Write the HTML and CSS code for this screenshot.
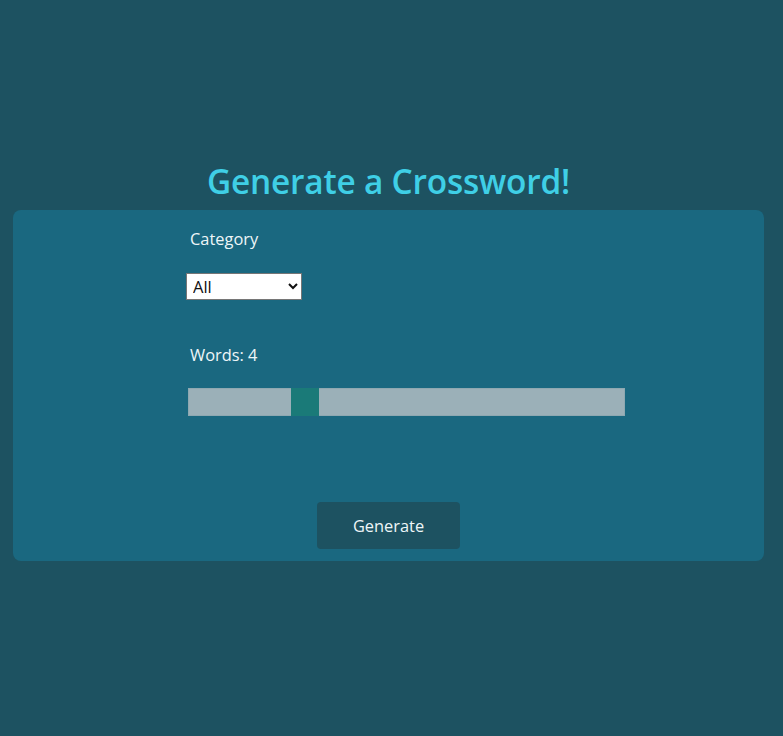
FILE: index.html
```html
<!DOCTYPE html>
<html lang="en">
<head>
<meta charset="utf-8">
<title>Generate a Crossword!</title>
<link rel="stylesheet" href="styles.css">
</head>
<body>
<main class="page">
  <h1 class="title">Generate a Crossword!</h1>
  <section class="card">
    <form class="form">
      <label class="label" for="cat">Category</label>
      <select id="cat" class="select">
        <option>All</option>
        <option>Animals</option>
        <option>Food</option>
      </select>
      <label class="label words" for="words">Words: 4</label>
      <input id="words" class="range" type="range" min="1" max="13" value="4">
    </form>
    <div class="actions">
      <button class="btn" type="button">Generate</button>
    </div>
  </section>
</main>
</body>
</html>
```

FILE: styles.css
```css
html, body {
  margin: 0;
  padding: 0;
  background: #1d5261;
  font-family: "Open Sans", "Noto Sans", sans-serif;
  color: #e8f2f5;
}
.page {
  padding: 160px 19px 0 13px;
}
.title {
  margin: 0 0 8px;
  text-align: center;
  font-size: 33.4px;
  line-height: 42px;
  font-weight: 600;
  color: #3fcfe6;
  letter-spacing: -0.2px;
}
.card {
  background: #1a6880;
  border-radius: 8px;
  height: 351px;
  box-sizing: border-box;
  padding: 16px 0 12px;
  display: flex;
  flex-direction: column;
}
.form {
  display: flex;
  flex-direction: column;
  align-items: flex-start;
  padding-left: 173px;
  width: 440px;
}
.label {
  font-size: 16.4px;
  line-height: 26px;
  margin-left: 4px;
  color: #eef6f8;
}
.select {
  margin-top: 21px;
  width: 116px;
  height: 27px;
  box-sizing: border-box;
  font-family: "Open Sans", "Noto Sans", sans-serif;
  font-size: 16.5px;
  color: #111;
  background: #fff;
  border: 1px solid #767676;
  border-radius: 0;
  padding: 0 2px;
}
.words {
  margin-top: 42px;
}
.range {
  -webkit-appearance: none;
  appearance: none;
  margin: 20px 0 0 2px;
  width: 437px;
  height: 28px;
  background: #9bb0b8;
  border: 1px solid #8ea8b1;
  box-sizing: border-box;
  outline: none;
  padding: 0;
}
.range::-webkit-slider-thumb {
  -webkit-appearance: none;
  appearance: none;
  width: 28px;
  height: 28px;
  background: #1a7a78;
  border: none;
}
.actions {
  margin-top: auto;
  display: flex;
  justify-content: center;
}
.btn {
  width: 143px;
  height: 47px;
  background: #1d5261;
  color: #eef6f8;
  border: none;
  border-radius: 4px;
  font-family: "Open Sans", "Noto Sans", sans-serif;
  font-size: 16.4px;
}
```
